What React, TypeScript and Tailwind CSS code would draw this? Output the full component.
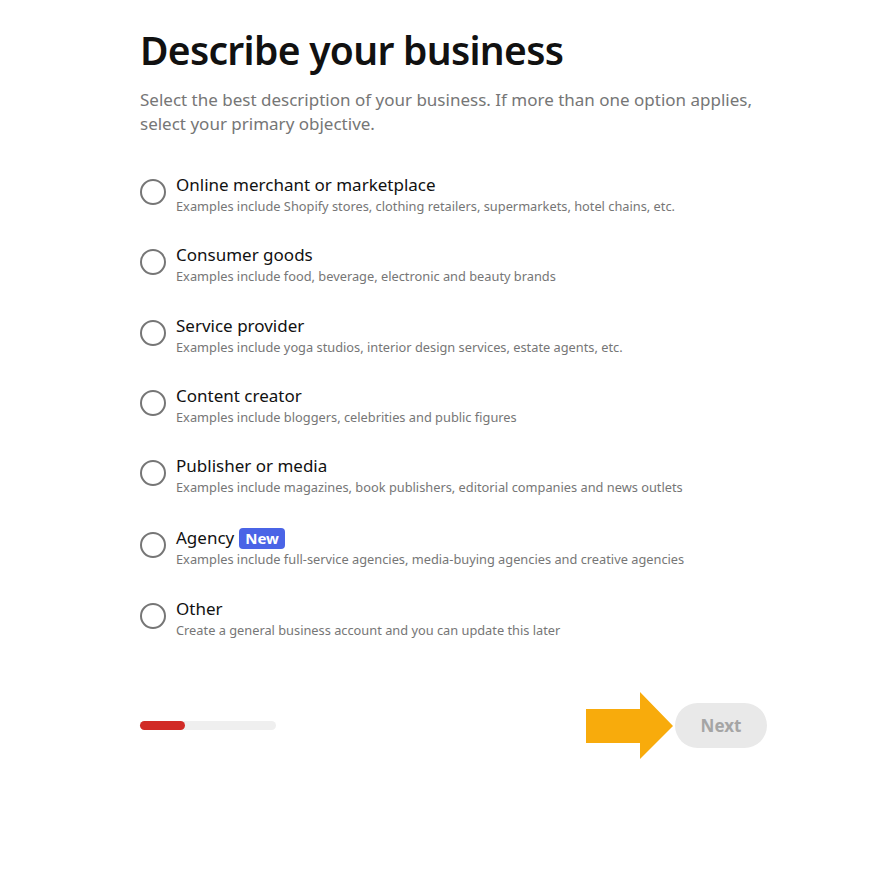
import React from "react";

const options = [
  { title: "Online merchant or marketplace", desc: "Examples include Shopify stores, clothing retailers, supermarkets, hotel chains, etc." },
  { title: "Consumer goods", desc: "Examples include food, beverage, electronic and beauty brands" },
  { title: "Service provider", desc: "Examples include yoga studios, interior design services, estate agents, etc." },
  { title: "Content creator", desc: "Examples include bloggers, celebrities and public figures" },
  { title: "Publisher or media", desc: "Examples include magazines, book publishers, editorial companies and news outlets" },
  { title: "Agency", desc: "Examples include full-service agencies, media-buying agencies and creative agencies", badge: true },
  { title: "Other", desc: "Create a general business account and you can update this later" },
];

export default function App() {
  return (
    <div className="min-h-[873px] w-full bg-white" style={{ fontFamily: '"Noto Sans", "Open Sans", sans-serif' }}>
      <div className="ml-[140px] w-[627px] pt-[26px]">
        <h1 className="text-[39px] leading-[48px] font-semibold text-[#111111] tracking-[-0.7px]">Describe your business</h1>
        <p className="mt-[14px] text-[17px] leading-[24px] text-[#767676]">
          Select the best description of your business. If more than one option applies, select your primary objective.
        </p>
        <div className="mt-[37px] flex flex-col gap-[28.3px]">
          {options.map((o) => (
            <div key={o.title} className={`flex items-start gap-[10px] ${o.badge ? "pt-[2px]" : ""}`}>
              <div className="mt-[6px] h-[26px] w-[26px] shrink-0 rounded-full border-2 border-[#767676]" />
              <div className="flex flex-col">
                <div className="flex items-center gap-[5px]">
                  <span className="text-[17px] leading-[24px] text-[#111111]">{o.title}</span>
                  {o.badge && (
                    <span className="rounded-[4px] bg-[#4a64e6] px-[6px] text-[15px] leading-[21px] font-bold text-white">New</span>
                  )}
                </div>
                <span className="text-[12.8px] leading-[18px] text-[#767676]">{o.desc}</span>
              </div>
            </div>
          ))}
        </div>
        <div className="mt-[53px] flex items-center justify-between">
          <div className="h-[9px] w-[136px] rounded-full bg-[#efefef]">
            <div className="h-[9px] w-[45px] rounded-full bg-[#d12b26]" />
          </div>
          <div className="flex items-center gap-[2px]">
            <svg width="87" height="67" viewBox="0 0 87 67">
              <polygon points="0,17 54,17 54,0 87,34 54,67 54,51 0,51" fill="#f8ab0c" />
            </svg>
            <button className="h-[45px] w-[92px] rounded-full bg-[#e9e9e9] text-[17px] font-bold text-[#a5a5a5]">Next</button>
          </div>
        </div>
      </div>
    </div>
  );
}
